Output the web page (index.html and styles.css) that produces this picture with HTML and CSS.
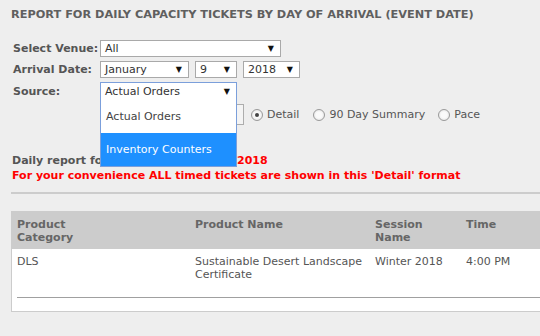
FILE: index.html
```html
<!DOCTYPE html>
<html>
<head>
	<meta charset="utf-8">
	<title>Daily Capacity Report</title>
	<link rel="stylesheet" href="styles.css">
</head>
<body>
<div class="page">
	<h2 class="title">REPORT FOR DAILY CAPACITY TICKETS BY DAY OF ARRIVAL (EVENT DATE)</h2>

	<div class="form">
		<div class="row">
			<label>Select Venue:</label>
			<div class="sel sel-venue">All<span class="arr">&#9660;</span></div>
		</div>
		<div class="row">
			<label>Arrival Date:</label>
			<div class="sel sel-month">January<span class="arr">&#9660;</span></div>
			<div class="sel sel-day">9<span class="arr">&#9660;</span></div>
			<div class="sel sel-year">2018<span class="arr">&#9660;</span></div>
		</div>
		<div class="row">
			<label>Source:</label>
			<div class="sel-wrap">
				<div class="sel sel-source focus">Actual Orders<span class="arr">&#9660;</span></div>
				<ul class="dropdown">
					<li>Actual Orders</li>
					<li class="active">Inventory Counters</li>
				</ul>
			</div>
		</div>
		<div class="row opts">
			<label></label>
			<span class="box"></span>
			<span class="radio checked"></span><span class="rlabel r1">Detail</span>
			<span class="radio"></span><span class="rlabel r2">90 Day Summary</span>
			<span class="radio"></span><span class="rlabel">Pace</span>
		</div>
	</div>

	<p class="daily">Daily report for Arrival Date - <span class="red">01/09/2018</span></p>
	<p class="note">For your convenience ALL timed tickets are shown in this 'Detail' format</p>
	<div class="sep"></div>

	<div class="table-box">
		<table>
			<tr>
				<th class="c1">Product<br>Category</th>
				<th class="c2">Product Name</th>
				<th class="c3">Session<br>Name</th>
				<th>Time</th>
			</tr>
			<tr>
				<td>DLS</td>
				<td>Sustainable Desert Landscape Certificate</td>
				<td>Winter 2018</td>
				<td>4:00 PM</td>
			</tr>
		</table>
		<div class="rule"></div>
	</div>
</div>
</body>
</html>
```

FILE: styles.css
```css
body {
	margin: 0;
	background-color: #eeeeee;
	font-family: "DejaVu Sans", Verdana, sans-serif;
	font-size: 11px;
	color: #555;
	overflow: hidden;
}

.page {
	padding: 8px 0 0 11px;
}

.title {
	margin: 0;
	font-size: 11.3px;
	font-weight: bold;
	color: #5f5f5f;
	line-height: 14px;
}

.form {
	margin-top: 18px;
	padding-left: 2px;
	display: flex;
	flex-direction: column;
	gap: 4px;
}

.row {
	display: flex;
	align-items: center;
}

.row label {
	width: 87px;
	flex: none;
	white-space: nowrap;
	font-weight: bold;
	color: #555;
}

.sel {
	position: relative;
	box-sizing: border-box;
	height: 17px;
	line-height: 15px;
	padding-left: 4px;
	background: #fff;
	border: 1px solid #a9a9a9;
	color: #333;
}

.sel .arr {
	position: absolute;
	right: 6px;
	top: 0;
	font-size: 8px;
	color: #111;
}

.sel-venue { width: 181px; }
.sel-month { width: 89px; }
.sel-day { width: 42px; margin-left: 6px; }
.sel-year { width: 57px; margin-left: 6px; }

.sel-wrap {
	position: relative;
}

.sel-source {
	width: 137px;
	height: 19px;
	line-height: 17px;
	border-color: #7b9fdb;
}

.dropdown {
	position: absolute;
	left: 0;
	top: 18px;
	z-index: 2;
	box-sizing: border-box;
	width: 137px;
	margin: 0;
	padding: 0;
	list-style: none;
	background: #fff;
	border: 1px solid #7b9fdb;
	border-top: none;
}

.dropdown li {
	height: 33px;
	line-height: 33px;
	padding-left: 5px;
	color: #444;
}

.dropdown li.active {
	background-color: #1e90ff;
	color: #fff;
}

.opts {
	margin-top: -1px;
}

.box {
	box-sizing: border-box;
	width: 144px;
	height: 21px;
	margin-right: 7px;
	border: 1px solid #adadad;
	background: #f4f4f4;
}

.radio {
	box-sizing: border-box;
	width: 12px;
	height: 12px;
	border-radius: 50%;
	border: 1px solid #9a9a9a;
	background: radial-gradient(circle, #fafafa 40%, #dcdcdc 100%);
	margin-right: 4px;
	display: flex;
	align-items: center;
	justify-content: center;
}

.radio.checked::after {
	content: "";
	width: 4px;
	height: 4px;
	border-radius: 50%;
	background: #444;
}

.r1 {
	margin-right: 14px;
}

.r2 {
	margin-right: 13px;
}

.daily {
	margin: 29px 0 0 1px;
	font-weight: bold;
	color: #555;
	line-height: 14px;
}

.red {
	color: #ff0000;
}

.note {
	margin: 1px 0 0 1px;
	font-weight: bold;
	color: #ff0000;
	line-height: 14px;
}

.sep {
	margin-top: 9px;
	height: 2px;
	background: #cccccc;
}

.table-box {
	margin-top: 17px;
	width: 600px;
	background: #fff;
	border: 1px solid #cccccc;
}

table {
	width: 100%;
	border-collapse: collapse;
}

th, td {
	text-align: left;
	vertical-align: top;
	padding: 6px 6px 5px 5px;
	line-height: 13px;
}

th {
	background-color: #cccccc;
	color: #666;
	font-weight: bold;
}

td {
	padding-bottom: 16px;
}

.c1 { width: 167px; }
.c2 { width: 169px; }
.c3 { width: 80px; }

.rule {
	margin-left: 5px;
	border-top: 1px solid #a0a0a0;
	height: 13px;
}
```
